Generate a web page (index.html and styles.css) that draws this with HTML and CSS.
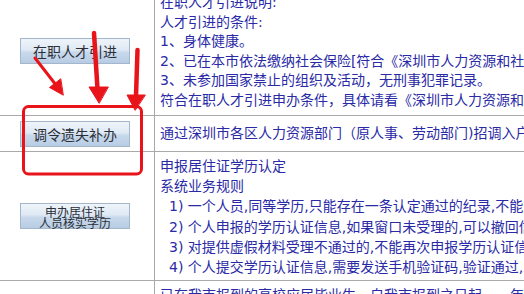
FILE: index.html
```html
<!DOCTYPE html>
<html lang="zh-CN">
<head>
<meta charset="utf-8">
<title>业务列表</title>
<link rel="stylesheet" href="styles.css">
</head>
<body>
<div class="page">
  <div class="table">
    <div class="row r1">
      <div class="cell-left"><button class="btn">在职人才引进</button></div>
      <div class="cell-right">
        <div>在职人才引进说明:</div>
        <div>人才引进的条件:</div>
        <div>1、身体健康。</div>
        <div>2、已在本市依法缴纳社会保险[符合《深圳市人力资源和社会保障局关于》</div>
        <div>3、未参加国家禁止的组织及活动，无刑事犯罪记录。</div>
        <div>符合在职人才引进申办条件，具体请看《深圳市人力资源和社会保障局》</div>
      </div>
    </div>
    <div class="row r2">
      <div class="cell-left"><button class="btn">调令遗失补办</button></div>
      <div class="cell-right">
        <div>通过深圳市各区人力资源部门（原人事、劳动部门)招调入户的人员</div>
      </div>
    </div>
    <div class="row r3">
      <div class="cell-left"><button class="btn btn-two">申办居住证<br>人员核实学历</button></div>
      <div class="cell-right">
        <div>申报居住证学历认定</div>
        <div>系统业务规则</div>
        <div class="ind">1) 一个人员,同等学历,只能存在一条认定通过的纪录,不能重复申报</div>
        <div class="ind">2) 个人申报的学历认证信息,如果窗口未受理的,可以撤回信息</div>
        <div class="ind">3) 对提供虚假材料受理不通过的,不能再次申报学历认证信息</div>
        <div class="ind">4) 个人提交学历认证信息,需要发送手机验证码,验证通过,才能提交</div>
      </div>
    </div>
    <div class="row r4">
      <div class="cell-left"></div>
      <div class="cell-right">
        <div>已在我市报到的高校应届毕业生，自我市报到之日起，一年内</div>
      </div>
    </div>
  </div>
  <svg class="marks" width="524" height="294" viewBox="0 0 524 294">
    <g fill="#e8141a" stroke="#e8141a" stroke-linecap="round" stroke-linejoin="round">
      <line x1="35" y1="58" x2="56" y2="85" stroke-width="3"/>
      <polygon points="63,95 49.5,87.5 60.5,79" stroke-width="1"/>
      <line x1="94" y1="33" x2="97.5" y2="89" stroke-width="4.5"/>
      <polygon points="99,103 89,87 108,87" stroke-width="1"/>
      <line x1="137.5" y1="50" x2="136" y2="96" stroke-width="4.5"/>
      <polygon points="135,110 127,95 145,95" stroke-width="1"/>
    </g>
    <rect x="23.5" y="106.5" width="118" height="67.5" rx="5" ry="5" fill="none" stroke="#e8141a" stroke-width="3"/>
  </svg>
</div>
</body>
</html>
```

FILE: styles.css
```css
html, body {
  margin: 0;
  padding: 0;
  background: #ffffff;
}

body {
  width: 524px;
  height: 294px;
  overflow: hidden;
  font-family: "DejaVu Sans", "Noto Sans CJK SC", sans-serif;
  font-size: 14px;
}

.page {
  position: relative;
  width: 524px;
  height: 294px;
  overflow: hidden;
}

.table {
  margin-top: -10px;
  display: flex;
  flex-direction: column;
}

.row {
  display: grid;
  grid-template-columns: 155px 1fr;
  border-bottom: 1px solid #a9a9a9;
}

.cell-left {
  border-right: 1px solid #a9a9a9;
  display: flex;
  align-items: center;
  padding-left: 20px;
}

.cell-right {
  padding-left: 5px;
  color: #2a2aa6;
  white-space: nowrap;
  overflow: hidden;
}

.r1 .cell-right {
  line-height: 19.5px;
  padding-top: 3px;
  padding-bottom: 5px;
}

.r1 .cell-left {
  padding-bottom: 3px;
}

.r2 .cell-right {
  line-height: 20px;
  padding-top: 7px;
  padding-bottom: 8px;
}

.r3 .cell-right {
  line-height: 20.2px;
  padding-top: 4px;
  padding-bottom: 3px;
}

.r4 .cell-right {
  line-height: 20px;
  padding-top: 4px;
  padding-bottom: 4px;
}

.ind {
  padding-left: 9px;
}

.btn {
  width: 110px;
  height: 26px;
  margin: 0;
  padding: 0;
  border: 1px solid #a3b6cc;
  border-radius: 0;
  background: linear-gradient(to bottom, #eef4fa 0%, #dfe9f4 45%, #c9d9ec 55%, #b7cce4 100%);
  color: #2b2f36;
  font-family: "Noto Sans CJK SC", sans-serif;
  font-size: 14px;
  line-height: 24px;
  text-align: center;
  white-space: nowrap;
}

.btn-two {
  font-size: 12px;
  line-height: 11px;
  padding-top: 1px;
}

.marks {
  position: absolute;
  left: 0;
  top: 0;
  pointer-events: none;
}
```
